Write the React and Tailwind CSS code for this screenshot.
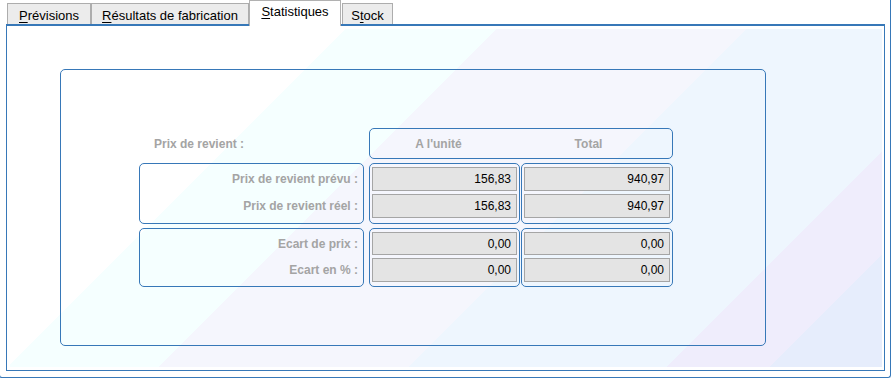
import React from 'react';

const BLUE = 'border-[#3778b8]';

const tabs = [
  { pre: '', key: 'P', post: 'révisions', w: 'w-[84px]' },
  { pre: '', key: 'R', post: 'ésultats de fabrication', w: 'w-[158px]' },
  { pre: '', key: 'S', post: 'tatistiques', w: 'w-[92px]', active: true },
  { pre: 'S', key: 't', post: 'ock', w: 'w-[51px] ml-[1px]' },
];

function Tab({ tab }) {
  if (tab.active) {
    return (
      <div className={`${tab.w} h-[26px] -mb-[2px] relative z-10 bg-white border border-b-0 border-[#b1b1b1] flex justify-center pt-[3px] text-[13px] text-black leading-[15px]`}>
        <span>{tab.pre}<span className="underline underline-offset-2">{tab.key}</span>{tab.post}</span>
      </div>
    );
  }
  return (
    <div className={`${tab.w} h-[21px] bg-[#ececec] border border-b-0 border-[#adadad] flex justify-center pt-[4px] text-[13px] text-black leading-[15px]`}>
      <span>{tab.pre}<span className="underline underline-offset-2">{tab.key}</span>{tab.post}</span>
    </div>
  );
}

function Field({ value, h }) {
  return (
    <div className={`${h} bg-[#e4e4e4] border border-[#a5a5a5] flex items-center justify-end pr-[5px] text-[12px] text-black`}>
      {value}
    </div>
  );
}

function Group({ labels, unit, total, last }) {
  const h2 = last ? 'h-[24px]' : 'h-[24px]';
  const h1 = last ? 'h-[23px]' : 'h-[24px]';
  const pb = last ? 'pb-[4px]' : 'pb-[5px]';
  return (
    <div className="flex">
      <div className={`w-[225px] border ${BLUE} rounded-[5px] pt-[3px] ${pb} px-[2px] flex flex-col gap-[3px]`}>
        <div className={`${h1} flex items-center justify-end pr-[3px] text-[12px] font-bold text-[#a4a4a4]`}>{labels[0]}</div>
        <div className={`${h2} flex items-center justify-end pr-[3px] text-[12px] font-bold text-[#a4a4a4]`}>{labels[1]}</div>
      </div>
      <div className={`ml-[5px] w-[151px] border ${BLUE} rounded-[5px] pt-[3px] ${pb} px-[2px] flex flex-col gap-[3px]`}>
        <Field value={unit[0]} h={h1} />
        <Field value={unit[1]} h={h2} />
      </div>
      <div className={`ml-[1px] w-[152px] border ${BLUE} rounded-[5px] pt-[3px] ${pb} px-[2px] flex flex-col gap-[3px]`}>
        <Field value={total[0]} h={h1} />
        <Field value={total[1]} h={h2} />
      </div>
    </div>
  );
}

export default function App() {
  return (
    <div className="w-[892px] h-[381px] bg-white overflow-hidden font-['Liberation_Sans',Arial,sans-serif]">
      <div className={`-ml-px w-[892px] h-[378px] border-l border-r border-b ${BLUE} rounded-b-[3px] pl-[6px]`}>
        {/* Onglets */}
        <div className="h-[24px] pl-[1px] flex items-end">
          {tabs.map((t) => (
            <Tab key={t.post} tab={t} />
          ))}
        </div>

        {/* Panneau */}
        <div className={`w-[879px] h-[347px] bg-white border-x border-b border-t-2 ${BLUE} pt-[3px] pb-[3px] pl-[3px] pr-[2px]`}>
          <div className="h-full bg-[linear-gradient(135deg,#ffffff_0%,#ffffff_27.7%,#f5ffff_27.7%,#f5ffff_40.2%,#f5f6fd_40.2%,#f5f6fd_60.9%,#eef6fe_60.9%,#eef6fe_82.2%,#efedfc_82.2%,#efedfc_90.7%,#e6edfc_90.7%,#e6edfc_100%)] pl-[50px] pt-[40px]">
            <div className={`w-[706px] h-[277px] border ${BLUE} rounded-[5px] pl-[78px] pt-[58px] flex flex-col`}>
              {/* En-tête */}
              <div className="flex h-[31px]">
                <div className="w-[225px] flex items-center pl-[15px] text-[12px] font-bold text-[#a4a4a4]">
                  Prix de revient :
                </div>
                <div className={`ml-[5px] w-[304px] border ${BLUE} rounded-[5px] flex items-center text-[12px] font-bold text-[#a4a4a4]`}>
                  <span className="w-[151px] text-center pr-[14px]">A l'unité</span>
                  <span className="flex-1 text-center pr-[16px]">Total</span>
                </div>
              </div>

              <div className="mt-[4px]">
                <Group
                  labels={['Prix de revient prévu :', 'Prix de revient réel :']}
                  unit={['156,83', '156,83']}
                  total={['940,97', '940,97']}
                />
              </div>
              <div className="mt-[4px]">
                <Group
                  labels={['Ecart de prix :', 'Ecart en % :']}
                  unit={['0,00', '0,00']}
                  total={['0,00', '0,00']}
                  last
                />
              </div>
            </div>
          </div>
        </div>
      </div>
    </div>
  );
}
